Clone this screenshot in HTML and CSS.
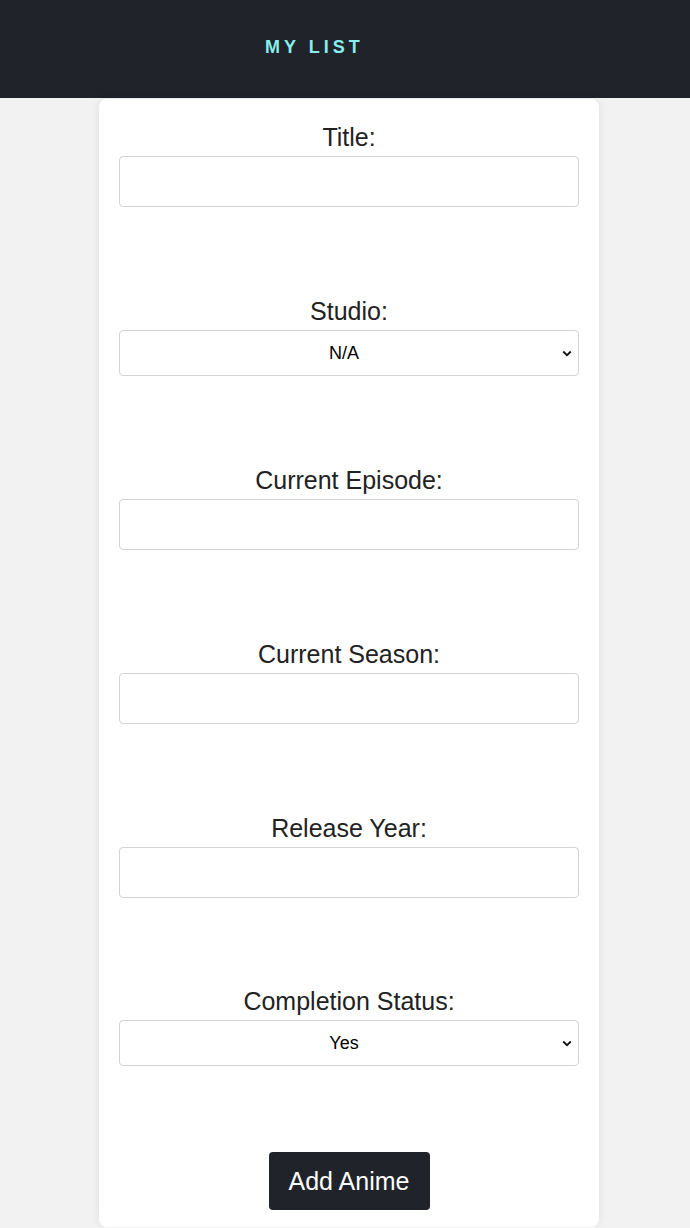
FILE: index.html
```html
<!DOCTYPE html>
<html lang="en">
<head>
<meta charset="utf-8">
<title>My List</title>
<link rel="stylesheet" href="styles.css">
</head>
<body>
<header class="topbar">
  <h1 class="brand">MY LIST</h1>
</header>
<main class="page">
  <form class="card">
    <div class="field">
      <label class="label" for="title">Title:</label>
      <input class="input" id="title" type="text">
    </div>
    <div class="field">
      <label class="label" for="studio">Studio:</label>
      <select class="select" id="studio"><option>N/A</option></select>
    </div>
    <div class="field">
      <label class="label" for="episode">Current Episode:</label>
      <input class="input" id="episode" type="text">
    </div>
    <div class="field">
      <label class="label" for="season">Current Season:</label>
      <input class="input" id="season" type="text">
    </div>
    <div class="field">
      <label class="label" for="year">Release Year:</label>
      <input class="input" id="year" type="text">
    </div>
    <div class="field">
      <label class="label" for="status">Completion Status:</label>
      <select class="select" id="status"><option>Yes</option></select>
    </div>
    <div class="actions">
      <button class="btn" type="button">Add Anime</button>
    </div>
  </form>
</main>
</body>
</html>
```
FILE: styles.css
```css
* { box-sizing: border-box; }
html, body {
  margin: 0;
  padding: 0;
  background: #f2f2f2;
  font-family: "Liberation Sans", Arial, Helvetica, sans-serif;
}
.topbar {
  height: 98px;
  background: #20232a;
  display: flex;
  align-items: center;
  padding-left: 265px;
}
.brand {
  margin: 0;
  font-size: 18px;
  font-weight: 700;
  letter-spacing: 4px;
  color: #86efec;
  line-height: 1;
  padding-bottom: 4px;
}
.page {
  display: flex;
  justify-content: center;
  padding-top: 1px;
  padding-left: 8px;
}
.card {
  width: 500px;
  background: #fff;
  border-radius: 8px;
  box-shadow: 0 0 10px rgba(0, 0, 0, 0.08);
  padding: 24px 20px 17px;
  display: flex;
  flex-direction: column;
}
.field {
  display: flex;
  flex-direction: column;
  margin-bottom: 90px;
}
.field:nth-child(5) { margin-bottom: 89px; }
.label {
  font-size: 25px;
  line-height: 28px;
  color: #222;
  text-align: center;
  margin-bottom: 5px;
}
.input {
  height: 51px;
  border: 1px solid #d3d3d3;
  border-radius: 4px;
  background: #fff;
  font-size: 18px;
  font-family: inherit;
  padding: 0 10px;
}
.select {
  height: 46px;
  border: 1px solid #d3d3d3;
  border-radius: 4px;
  background: #fff url("data:image/svg+xml;utf8,<svg xmlns='http://www.w3.org/2000/svg' width='10' height='7' viewBox='0 0 10 7'><path d='M1.2 1.5 L5 5.2 L8.8 1.5' fill='none' stroke='%23111' stroke-width='1.8'/></svg>") no-repeat right 6px center;
  font-size: 18px;
  font-family: inherit;
  color: #000;
  text-align: center;
  text-align-last: center;
  appearance: none;
  -webkit-appearance: none;
  padding: 0 20px 0 10px;
}
.actions {
  display: flex;
  justify-content: center;
  margin-top: -4px;
}
.btn {
  width: 161px;
  height: 58px;
  background: #20232a;
  color: #fff;
  border: none;
  border-radius: 4px;
  font-family: inherit;
  font-size: 25px;
  padding: 0;
}
```
